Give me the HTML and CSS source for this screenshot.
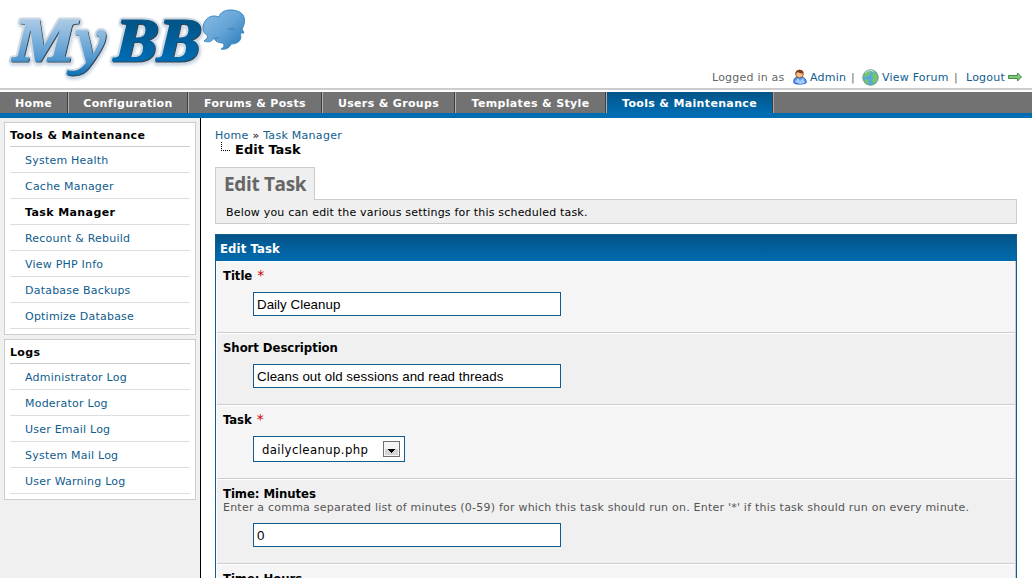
FILE: index.html
```html
<!DOCTYPE html>
<html lang="en">
<head>
<meta charset="utf-8">
<title>Edit Task</title>
<link rel="stylesheet" href="styles.css">
</head>
<body>
<header class="header">
  <svg class="logo" width="260" height="88" viewBox="0 0 260 88" role="img" aria-label="MyBB">
    <defs>
      <linearGradient id="dark" gradientUnits="userSpaceOnUse" x1="0" y1="18" x2="0" y2="62"><stop offset="0" stop-color="#075283"/><stop offset="1" stop-color="#006db5"/></linearGradient>
      <linearGradient id="pale" gradientUnits="userSpaceOnUse" x1="0" y1="18" x2="0" y2="76"><stop offset="0" stop-color="#b0cde8"/><stop offset=".7" stop-color="#5298cf"/><stop offset="1" stop-color="#096db2"/></linearGradient>
      <linearGradient id="bubble" x1="0" y1="0" x2="1" y2="1"><stop offset="0" stop-color="#8abce4"/><stop offset=".5" stop-color="#65a4d6"/><stop offset="1" stop-color="#2377b9"/></linearGradient>
      <filter id="shadow" x="-10%" y="-10%" width="120%" height="130%"><feDropShadow dx="1" dy="2" stdDeviation="1.4" flood-color="#678db5" flood-opacity=".4"/></filter>
    </defs>
    <g class="logo-text" filter="url(#shadow)">
      <g class="logo-outline"><text x="13" y="61" textLength="61" lengthAdjust="spacingAndGlyphs">M</text><text x="76" y="61" textLength="31" lengthAdjust="spacingAndGlyphs">y</text><text x="114" y="61" textLength="86" lengthAdjust="spacingAndGlyphs">BB</text></g>
      <g class="logo-edge"><text x="14" y="62" textLength="61" lengthAdjust="spacingAndGlyphs">M</text><text x="77" y="62" textLength="31" lengthAdjust="spacingAndGlyphs">y</text><text x="115" y="62" textLength="86" lengthAdjust="spacingAndGlyphs">BB</text></g>
      <g class="logo-my"><text x="13" y="61" textLength="61" lengthAdjust="spacingAndGlyphs">M</text><text x="76" y="61" textLength="31" lengthAdjust="spacingAndGlyphs">y</text></g>
      <text class="logo-bb" x="114" y="61" textLength="86" lengthAdjust="spacingAndGlyphs">BB</text>
    </g>
    <path d="M219 17C221 8 238 8 243 15C246 20 244 26 242 29L244 33L240 33C243 40 238 44 231 44C230 47 227 50 221 49C225 47 224 45 223 43C218 43 215 41 214 38C211 43 207 42 204 41C207 39 208 37 207 35C202 33 202 24 206 20C209 16 214 15 219 17Z" fill="url(#bubble)" stroke="#3d88c2"/>
    <path d="M228 29h5l2 1m-20 8h4" stroke="#397fb8" fill="none"/>
  </svg>
  <div class="welcome">
    <span class="muted">Logged in as</span>
    <svg class="user-icon" width="16" height="16" viewBox="0 0 16 16"><path d="M2 14C1 9 4 8 7 8h2c4 0 6 4 5 6l-4 1H5Z" fill="#5697ef" stroke="#245dbc"/><path d="M3 13l3-4 2 3 3-3 2 5-5 1Z" fill="#a4cbff"/><circle cx="7.5" cy="5" r="3.8" fill="#f7c28b" stroke="#96572e"/><path d="M3.5 5C3 0 11-1 11.5 4C9 5 7 4 6 3Z" fill="#853c1c"/></svg>
    <a class="admin">Admin</a><span class="bar first">|</span>
    <svg class="globe" width="17" height="17" viewBox="0 0 17 17"><circle cx="8.5" cy="8.5" r="7.7" fill="#58a8db" stroke="#68a36b"/><path d="M3 4l4-2 2 2-3 3-3 1-1-1Zm8-2l4 4v5l-3 4-2-3 1-3-2-2 2-2Zm-8 8 4 1-1 4-3-2Z" fill="#74c56c"/><path d="M3 4c3-3 7-3 9-1" stroke="#d8f0df" fill="none"/></svg>
    <a class="view">View Forum</a><span class="bar second">|</span><a class="logout">Logout</a>
    <svg class="arrow" width="14" height="10" viewBox="0 0 14 10"><path d="M.5 3.5h9V1L13.5 5 9.5 9V6.5h-9Z" fill="#83c77d" stroke="#438e43"/></svg>
  </div>
</header>
<nav class="menu"><a class="t1">Home</a><a class="t2">Configuration</a><a class="t3">Forums &amp; Posts</a><a class="t4">Users &amp; Groups</a><a class="t5">Templates &amp; Style</a><a class="t6 active">Tools &amp; Maintenance</a><i></i></nav>
<div class="page">
  <aside class="sidebar">
    <section class="box"><h2>Tools &amp; Maintenance</h2><ul><li><a>System Health</a></li><li><a>Cache Manager</a></li><li><b>Task Manager</b></li><li><a>Recount &amp; Rebuild</a></li><li><a>View PHP Info</a></li><li><a>Database Backups</a></li><li><a>Optimize Database</a></li></ul></section>
    <section class="box"><h2>Logs</h2><ul><li><a>Administrator Log</a></li><li><a>Moderator Log</a></li><li><a>User Email Log</a></li><li><a>System Mail Log</a></li><li><a>User Warning Log</a></li></ul></section>
  </aside>
  <main class="content">
    <div class="breadcrumb"><a>Home</a> » <a>Task Manager</a></div>
    <div class="current"><svg width="10" height="10" viewBox="0 0 10 10"><path d="M.5 0v9.5M0 8.5h9" fill="none" stroke="#000" stroke-dasharray="1 1"/></svg><span>Edit Task</span></div>
    <h1 class="tab"><span>Edit Task</span></h1>
    <p class="intro">Below you can edit the various settings for this scheduled task.</p>
    <section class="form">
      <h2><span>Edit Task</span></h2>
      <div class="row title"><label><span>Title</span> <em>*</em></label><input value="Daily Cleanup"></div>
      <div class="row alt desc"><label><span>Short Description</span></label><input value="Cleans out old sessions and read threads"></div>
      <div class="row task"><label><span>Task</span> <em>*</em></label><div class="select"><span>dailycleanup.php</span><svg width="17" height="16" viewBox="0 0 17 16"><rect x=".5" y=".5" width="16" height="15" fill="#f5f5f5" stroke="#707070"/><path d="M2 8h13v6H2Z" fill="#d4d4d4"/><path d="M5 8h7v1h-1v1h-1v1H9v1H8v-1H7v-1H6V9H5Z"/></svg></div></div>
      <div class="row alt minutes"><label><span>Time: Minutes</span></label><p class="help">Enter a comma separated list of minutes (0-59) for which this task should run on. Enter '*' if this task should run on every minute.</p><input value="0"></div>
      <div class="row"><label><span>Time: Hours</span></label></div>
    </section>
  </main>
</div>
</body>
</html>
```
FILE: styles.css
```css
* { box-sizing: border-box; }
body { margin: 0; height: 578px; overflow: hidden; display: flex; flex-direction: column; background: #fff; color: #000; font: 11px/14px Verdana, "DejaVu Sans", sans-serif; letter-spacing: .22px; }
h1, h2, p, ul { margin: 0; padding: 0; }
a { color: #0f5c8e; }
svg { flex: none; }
.header { height: 90px; flex: none; display: flex; justify-content: space-between; border-bottom: 2px solid #ccc; }
.logo { display: block; }
.logo-text { font: italic bold 57px "Noto Serif", "DejaVu Serif", serif; letter-spacing: 0; }
.logo-outline { fill: #ccd9e5; stroke: #d0d9e1; stroke-width: 5px; stroke-linejoin: round; }
.logo-edge { fill: #34424e; stroke: #34424e; stroke-width: 1px; }
.logo-my { fill: url(#pale); stroke: url(#pale); stroke-width: 1.4px; }
.logo-bb { fill: url(#dark); stroke: url(#dark); stroke-width: 1.2px; }
.welcome { display: flex; align-items: center; height: 18px; margin: 68px 10px 0 0; white-space: nowrap; }
.welcome span, .welcome a { padding-top: 1px; }
.muted { color: #666; width: 80px; }
.user-icon { margin-right: 1px; }
.admin { margin-left: 1px; width: 41px; }
.first { width: 11px; }
.globe { margin-right: 3px; }
.view { width: 72px; }
.second { width: 12px; }
.logout { width: 42px; }
.bar { color: #666; }
.menu { height: 28px; flex: none; display: flex; padding-top: 2px; background: #727272 content-box; border-bottom: 5px solid #006cb1; }
.menu a { height: 21px; line-height: 23px; border-right: 1px solid #3f3f3f; border-left: 1px solid #b0b0b0; color: #fff; font-weight: bold; letter-spacing: .34px; white-space: nowrap; text-align: center; }
.menu i { border-left: 1px solid #a4a4a4; }
.menu .t1 { width: 68px; border-left: 0; }
.menu .t2 { width: 120px; }
.menu .t3 { width: 134px; }
.menu .t4 { width: 133px; }
.menu .t5 { width: 151px; }
.menu .t6 { width: 167px; background: linear-gradient(#045487, #006cb1); }
.page { flex: 1; min-height: 0; display: flex; }
.sidebar { width: 201px; flex: none; padding: 4px; background: #f0f0f0; border-right: 1px solid #000; }
.box { width: 192px; padding: 5px; margin-bottom: 4px; border: 1px solid #ccc; background: #fff; }
.box h2 { height: 19px; line-height: 15px; border-bottom: 1px solid #ccc; font-size: 11px; letter-spacing: .36px; }
.box b { letter-spacing: .4px; }
.box ul { list-style: none; }
.box li { height: 26px; line-height: 27px; padding-left: 15px; border-bottom: 1px solid #ddd; }
.content { flex: none; width: 831px; padding: 10px 15px 0 14px; }
.breadcrumb { height: 14px; line-height: 15px; letter-spacing: .28px; }
.current { height: 25px; display: flex; padding-left: 6px; font: bold 13px/15px "DejaVu Sans", sans-serif; letter-spacing: 0; }
.current span { margin-left: 4px; }
.tab { width: 100px; height: 33px; margin-bottom: -1px; padding-left: 8px; position: relative; border: 1px solid #ccc; border-bottom: 0; background: #efefef; color: #666; font: bold 19px/32px "Open Sans", sans-serif; letter-spacing: -.35px; white-space: nowrap; }
.intro { height: 25px; padding-left: 10px; border: 1px solid #ccc; background: #efefef; line-height: 25px; letter-spacing: .19px; }
.form { margin-top: 10px; border: 1px solid #0f5c8e; border-bottom: 0; }
.form h2 { height: 26px; padding-left: 4px; background: linear-gradient(#045487, #006cb1); color: #fff; font: bold 13px/27px "DejaVu Sans Condensed", sans-serif; letter-spacing: .1px; }
.row { margin-left: 1px; padding: 7px 6px 0; border-right: 1px solid #ccc; border-bottom: 1px solid #ccc; background: #f5f5f5; box-shadow: inset 0 1px #fff; }
.alt { background: #f0f0f0; }
.row label { display: block; height: 14px; font: bold 13px/15px "DejaVu Sans Condensed", sans-serif; letter-spacing: -.06px; white-space: nowrap; }
em { margin-left: 1px; color: #c00; font: 14px/12px "DejaVu Sans", sans-serif; }
.row input { display: block; width: 308px; height: 24px; margin: 10px 0 0 30px; padding: 1px 3px 0; border: 1px solid #0f5c8e; background: #fff; color: #000; font: 13.33px "Liberation Sans", sans-serif; letter-spacing: .03px; }
.title, .desc { height: 72px; }
.task { height: 74px; }
.minutes { height: 85px; }
.help { height: 14px; color: #555; line-height: 15px; white-space: nowrap; }
.minutes input { margin-top: 9px; }
.select { display: flex; align-items: center; justify-content: space-between; width: 152px; height: 26px; margin: 10px 0 0 30px; padding: 0 4px 0 8px; border: 1px solid #0f5c8e; background: #fff; font: 13px "DejaVu Sans Condensed", sans-serif; letter-spacing: .38px; }
```
